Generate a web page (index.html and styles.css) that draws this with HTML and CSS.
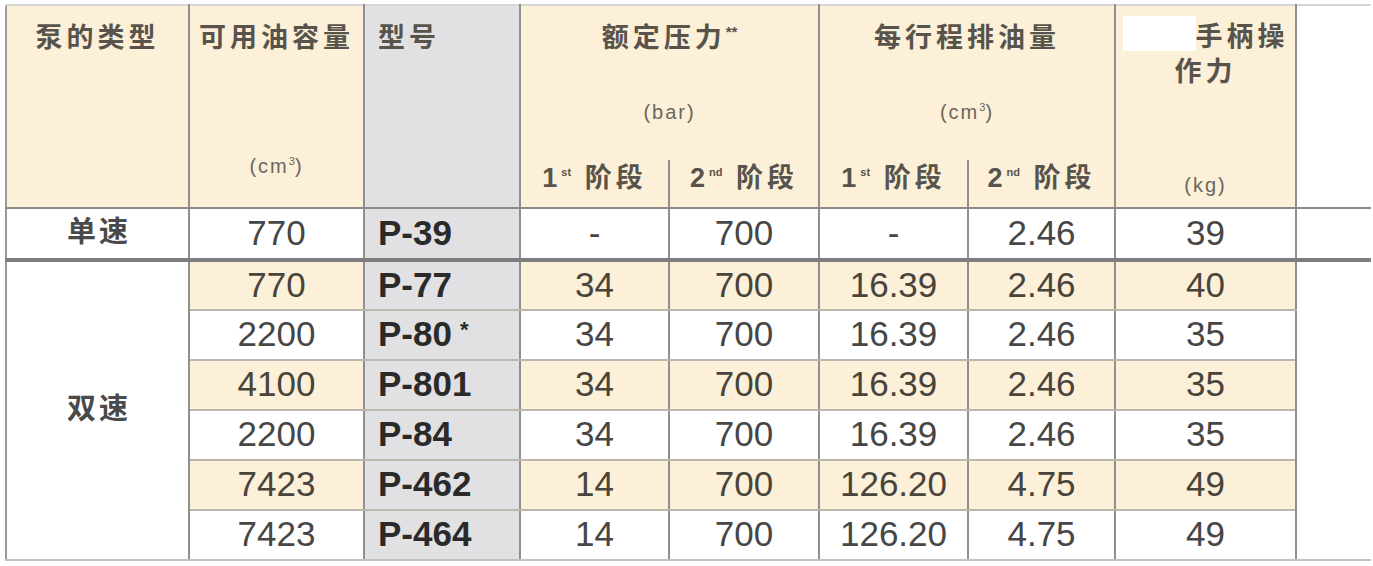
FILE: index.html
```html
<!DOCTYPE html>
<html lang="zh-CN">
<head>
<meta charset="utf-8">
<title>泵规格表</title>
<link rel="stylesheet" href="styles.css">
</head>
<body>
<div class="page">
<table class="spec">
  <colgroup>
    <col class="c1"><col class="c2"><col class="c3"><col class="c4"><col class="c5"><col class="c6"><col class="c7"><col class="c8"><col class="c9">
  </colgroup>
  <thead>
    <tr class="h1">
      <th rowspan="2" class="hc first"><div class="title">泵的类型</div></th>
      <th rowspan="2" class="hc"><div class="title">可用油容量</div><div class="unit unit-low">(cm<sup>3</sup>)</div></th>
      <th rowspan="2" class="hc model-h"><div class="title">型号</div></th>
      <th colspan="2" class="hc group"><div class="title">额定压力<span class="stars">**</span></div><div class="unit unit-mid">(bar)</div></th>
      <th colspan="2" class="hc group"><div class="title">每行程排油量</div><div class="unit unit-mid">(cm<sup>3</sup>)</div></th>
      <th rowspan="2" class="hc force"><div class="title two"><span class="mask"></span>手柄操<br>作力</div><div class="unit unit-kg">(kg)</div></th>
      <th rowspan="2" class="blank"></th>
    </tr>
    <tr class="h2">
      <th class="stage">1<sup>st</sup> 阶段</th>
      <th class="stage">2<sup>nd</sup> 阶段</th>
      <th class="stage">1<sup>st</sup> 阶段</th>
      <th class="stage">2<sup>nd</sup> 阶段</th>
    </tr>
  </thead>
  <tbody>
    <tr class="single">
      <td class="type first">单速</td>
      <td>770</td>
      <td class="model">P-39</td>
      <td>-</td>
      <td>700</td>
      <td>-</td>
      <td>2.46</td>
      <td>39</td>
      <td class="blank"></td>
    </tr>
    <tr class="alt">
      <td rowspan="6" class="type first dual">双速</td>
      <td>770</td>
      <td class="model">P-77</td>
      <td>34</td>
      <td>700</td>
      <td>16.39</td>
      <td>2.46</td>
      <td>40</td>
      <td rowspan="6" class="blank"></td>
    </tr>
    <tr>
      <td>2200</td>
      <td class="model">P-80<span class="ast">*</span></td>
      <td>34</td>
      <td>700</td>
      <td>16.39</td>
      <td>2.46</td>
      <td>35</td>
    </tr>
    <tr class="alt">
      <td>4100</td>
      <td class="model">P-801</td>
      <td>34</td>
      <td>700</td>
      <td>16.39</td>
      <td>2.46</td>
      <td>35</td>
    </tr>
    <tr>
      <td>2200</td>
      <td class="model">P-84</td>
      <td>34</td>
      <td>700</td>
      <td>16.39</td>
      <td>2.46</td>
      <td>35</td>
    </tr>
    <tr class="alt">
      <td>7423</td>
      <td class="model">P-462</td>
      <td>14</td>
      <td>700</td>
      <td>126.20</td>
      <td>4.75</td>
      <td>49</td>
    </tr>
    <tr class="last">
      <td>7423</td>
      <td class="model">P-464</td>
      <td>14</td>
      <td>700</td>
      <td>126.20</td>
      <td>4.75</td>
      <td>49</td>
    </tr>
  </tbody>
</table>
</div>
</body>
</html>
```
FILE: styles.css
```css
* { box-sizing: border-box; }
html, body { margin: 0; background: #ffffff; }
body {
  font-family: "Liberation Sans", Arial, "Noto Sans CJK SC", sans-serif;
  color: #454545;
}
.page { padding: 4px 3px 0 5px; }

.spec {
  border-collapse: collapse;
  table-layout: fixed;
  width: 1365px;
}
col.c1 { width: 183px; }
col.c2 { width: 175px; }
col.c3 { width: 156px; }
col.c4 { width: 149px; }
col.c5 { width: 150px; }
col.c6 { width: 149px; }
col.c7 { width: 147px; }
col.c8 { width: 181px; }
col.c9 { width: 75px; }

.spec th, .spec td {
  border-left: 2px solid #8f8f8f;
  border-right: 2px solid #8f8f8f;
  padding: 0;
}

/* ---------- header ---------- */
.spec thead th {
  background: #fcf0d8;
  font-family: "Liberation Sans", "Noto Sans CJK SC", sans-serif;
  font-weight: 700;
  color: #58534b;
}
.h1 { height: 155px; }
.h2 { height: 48px; }
.h1 th { border-top: 2px solid #d6d6d6; }
.spec th.hc {
  vertical-align: top;
  text-align: center;
  padding: 14px 4px 0;
}
.spec thead th.first { border-left: 2px solid #9a9a9a; }
.spec thead th.model-h { background: #e1e1e3; text-align: left; padding-left: 13px; }
.title {
  font-size: 27px;
  line-height: 36px;
  letter-spacing: 4px;
  white-space: nowrap;
}
.title.two { line-height: 35px; }
.stars {
  font-size: 15px;
  line-height: 0;
  letter-spacing: 0;
  vertical-align: 10px;
}
.mask {
  display: inline-block;
  width: 73px;
  height: 35px;
  margin-top: -4px;
  background: #ffffff;
  vertical-align: top;
}
.unit {
  font-family: "Liberation Sans", Arial, sans-serif;
  font-weight: 400;
  font-size: 20px;
  line-height: 24px;
  letter-spacing: 2px;
  color: #6c665e;
}
.unit sup { font-size: 11px; letter-spacing: 0; vertical-align: 8px; line-height: 0; }
.unit-mid { margin-top: 44px; }
.unit-low { margin-top: 98px; }
.unit-kg { margin-top: 83px; }

.spec thead th.group { border-bottom: none; }
.spec thead th.first,
.spec thead th[rowspan] { border-bottom: 2px solid #8a8a8a; }
.spec thead th.stage {
  border-top: none;
  border-bottom: 2px solid #8a8a8a;
  vertical-align: middle;
  text-align: center;
  font-size: 27px;
  line-height: 30px;
  letter-spacing: 4px;
  padding-bottom: 12px;
  white-space: nowrap;
}
.stage sup {
  font-family: "Liberation Sans", Arial, sans-serif;
  font-size: 11px;
  letter-spacing: 0;
  vertical-align: 11px;
  line-height: 0;
  margin-right: 2px;
}
.spec thead th.blank {
  background: #ffffff;
  border-right: none;
  border-bottom: 2px solid #8a8a8a;
}

/* ---------- body ---------- */
.spec tbody td {
  font-size: 35px;
  line-height: 35px;
  text-align: center;
  vertical-align: middle;
  padding-bottom: 3px;
  background: #ffffff;
  color: #464646;
  border-top: 2px solid #bcb7ad;
  border-bottom: 2px solid #bcb7ad;
}
.spec tbody tr { height: 50px; }
.spec tbody tr.single { height: 52px; }
.spec tbody tr.single td { border-bottom: 4px solid #7d7d7d; }
.spec tbody tr.last td { border-bottom: 2px solid #c2c2c2; }
.spec tbody tr.alt td { background: #fcf0d8; color: #48443c; }

.spec tbody td.model {
  background: #e1e1e3;
  text-align: left;
  padding-left: 13px;
  font-weight: 700;
  color: #2a2a2a;
}
.spec tbody tr.alt td.model { background: #e1e1e3; color: #2a2a2a; }
.ast {
  font-size: 22px;
  vertical-align: 9px;
  line-height: 0;
  margin-left: 8px;
}
.spec tbody td.type {
  font-family: "Liberation Sans", "Noto Sans CJK SC", sans-serif;
  font-size: 29px;
  font-weight: 700;
  letter-spacing: 3px;
  color: #4a4a4a;
  border-left: 2px solid #9a9a9a;
  padding-left: 3px;
}
.spec tbody tr.alt td.dual {
  background: #ffffff;
  color: #4a4a4a;
  border-bottom: 2px solid #c2c2c2;
}
.spec tbody td.blank {
  background: #ffffff;
  border-right: none;
}
.spec tbody tr.alt td.blank {
  background: #ffffff;
  border-top: 2px solid #7d7d7d;
  border-bottom: 2px solid #c2c2c2;
}
```
